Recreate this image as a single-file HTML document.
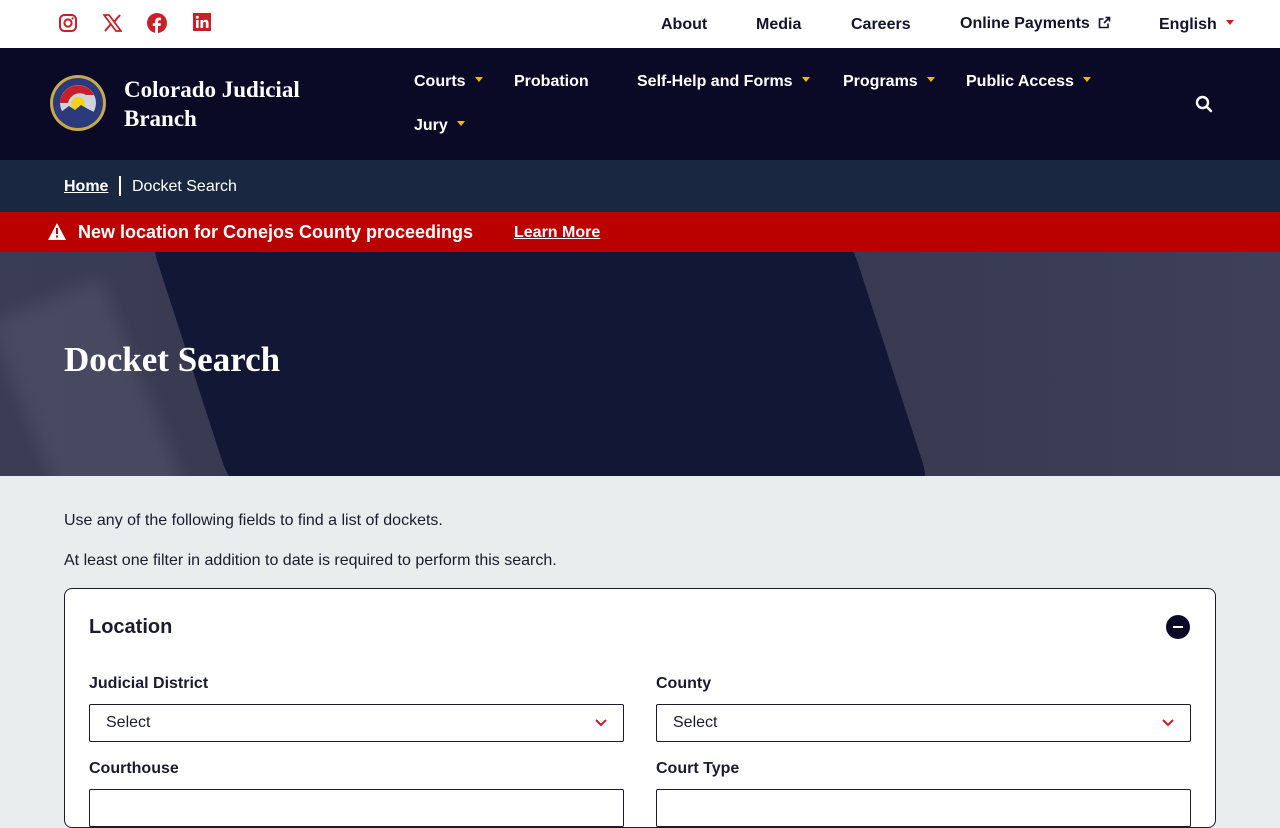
<!DOCTYPE html>
<html><head><meta charset="utf-8"><style>
*{box-sizing:border-box;margin:0;padding:0}
body{width:1280px;height:800px;overflow:hidden;font-family:"Liberation Sans",sans-serif;background:#e9eded;color:#1b1b2f}
.top{height:48px;background:#fff;position:relative}
.top .ic{position:absolute;top:13px}
.top .lk{position:absolute;top:15px;font-size:16px;font-weight:bold;color:#13132b}
.nav{height:112px;background:#0b0a26;position:relative;color:#fff}
.nav .n{position:absolute;font-size:16px;font-weight:bold}
.car{display:inline-block;width:0;height:0;border-left:4px solid transparent;border-right:4px solid transparent;border-top:5px solid #f2b51c;margin-left:9px;vertical-align:4px}
.bc{height:52px;background:#1a2740;color:#fff;font-size:16px;position:relative}
.alert{height:40px;background:#bb0000;color:#fff;position:relative;font-weight:bold}
.hero{height:224px;position:relative;overflow:hidden;background:linear-gradient(90deg,#3b3d55 0%,#35364e 50%,#3f4058 100%)}
.hero h1{position:absolute;left:64px;top:88px;font-family:"Liberation Serif",serif;font-size:35px;color:#fff;font-weight:bold}
.sel{position:absolute;height:38px;border:1px solid #1b1b2f;border-radius:2px;background:#fff;font-size:16px;padding:9px 16px}
.lab{position:absolute;font-size:16px;font-weight:bold}
</style></head><body>
<div class="top">
<svg class="ic" style="left:58px" width="20" height="20" viewBox="0 0 20 20"><rect x="2" y="2" width="16" height="16" rx="4.5" fill="none" stroke="#c8202a" stroke-width="2"/><circle cx="10" cy="10" r="3.6" fill="none" stroke="#c8202a" stroke-width="2"/><circle cx="14.6" cy="5.4" r="1.1" fill="#c8202a"/></svg>
<svg class="ic" style="left:103px" width="19" height="20" viewBox="0 0 19 20"><path d="M1 2h5l12 16h-5z" fill="none" stroke="#c8202a" stroke-width="1.8"/><path d="M17 2L11 9M2 18l6-7" stroke="#c8202a" stroke-width="2"/></svg>
<svg class="ic" style="left:147px" width="20" height="20" viewBox="0 0 20 20"><circle cx="10" cy="10" r="10" fill="#c8202a"/><path d="M11 20v-7h2.5l.4-2.8H11V8.6c0-.8.3-1.4 1.4-1.4H14V4.7c-.3 0-1.2-.1-2.2-.1-2.2 0-3.6 1.300-3.6 3.700v1.900H5.800V13h2.400v7z" fill="#fff"/></svg>
<svg class="ic" style="left:193px" width="18" height="18" viewBox="0 0 18 18"><rect width="18" height="18" fill="#c8202a"/><rect x="3" y="7" width="2.6" height="8" fill="#fff"/><circle cx="4.3" cy="4.3" r="1.5" fill="#fff"/><path d="M7.5 7h2.5v1.2c.5-.9 1.500-1.400 2.700-1.400 2 0 2.800 1.200 2.800 3.400V15h-2.600v-4.300c0-1.100-.3-1.800-1.300-1.800s-1.500.7-1.500 1.800V15H7.500z" fill="#fff"/></svg>
<span class="lk" style="left:661px;top:16px">About</span>
<span class="lk" style="left:756px;top:16px">Media</span>
<span class="lk" style="left:851px;top:16px">Careers</span>
<span class="lk" style="left:960px;top:15px">Online Payments <svg width="13" height="13" viewBox="0 0 13 13" style="margin-left:4px;vertical-align:-1px"><path d="M10 7.5V11.5H1.5V3H5.5M7.5 1.5H11.5V5.5M11.5 1.5L6 7" fill="none" stroke="#13132b" stroke-width="1.6"/></svg></span>
<span class="lk" style="left:1159px;top:16px">English<span class="car" style="border-top-color:#c8202a"></span></span>
</div>
<div class="nav">
<svg style="position:absolute;left:49px;top:26px" width="58" height="58" viewBox="0 0 58 58"><circle cx="29" cy="29" r="28" fill="#c9a94a"/><circle cx="29" cy="29" r="25" fill="#2a3a7a"/><circle cx="29" cy="29" r="18" fill="#d0d3da"/><path d="M11 29a18 18 0 0 1 34-8h-8a12 12 0 0 0-18 8z" fill="#c8202a"/><circle cx="29" cy="30" r="7" fill="#f6d21a"/><path d="M12 38l8-6 6 4 6-5 7 4 6 3a18 18 0 0 1-33 0z" fill="#2a3a7a"/></svg>
<div style="position:absolute;left:124px;top:27px;font-family:'Liberation Serif',serif;font-size:23px;font-weight:bold;line-height:29px">Colorado Judicial<br>Branch</div>
<span class="n" style="left:414px;top:25px">Courts<span class="car"></span></span>
<span class="n" style="left:514px;top:25px">Probation</span>
<span class="n" style="left:637px;top:25px">Self-Help and Forms<span class="car"></span></span>
<span class="n" style="left:843px;top:25px">Programs<span class="car"></span></span>
<span class="n" style="left:966px;top:25px">Public Access<span class="car"></span></span>
<span class="n" style="left:414px;top:69px">Jury<span class="car"></span></span>
<svg style="position:absolute;left:1195px;top:47px" width="18" height="18" viewBox="0 0 18 18"><circle cx="7.500" cy="7.500" r="5.500" fill="none" stroke="#fff" stroke-width="2.400"/><path d="M11.500 11.500L16 16" stroke="#fff" stroke-width="2.600" stroke-linecap="round"/></svg>
</div>
<div class="bc"><span style="position:absolute;left:64px;top:18px;font-weight:bold;text-decoration:underline">Home</span><span style="position:absolute;left:119px;top:16px;width:2px;height:20px;background:#fff"></span><span style="position:absolute;left:132px;top:18px">Docket Search</span></div>
<div class="alert">
<svg style="position:absolute;left:48px;top:11px" width="18" height="17" viewBox="0 0 18 17"><path d="M9 0L18 17H0z" fill="#fff"/><rect x="8" y="5" width="2" height="6" fill="#bb0000"/><rect x="8" y="12.500" width="2" height="2" fill="#bb0000"/></svg>
<span style="position:absolute;left:78px;top:10px;font-size:18px">New location for Conejos County proceedings</span>
<span style="position:absolute;left:514px;top:12px;font-size:16px;text-decoration:underline">Learn More</span>
</div>
<div class="hero">
<div style="position:absolute;left:30px;top:40px;width:120px;height:240px;background:#55576e;transform:rotate(-22deg);opacity:.5;filter:blur(8px)"></div>
<div style="position:absolute;left:190px;top:-40px;width:700px;height:300px;background:#121735;border-radius:50px;transform:skewX(18deg)"></div>
<h1>Docket Search</h1>
</div>
<div style="position:relative">
<div style="position:absolute;left:64px;top:36px;font-size:16px">Use any of the following fields to find a list of dockets.</div>
<div style="position:absolute;left:64px;top:76px;font-size:16px">At least one filter in addition to date is required to perform this search.</div>
<div style="position:absolute;left:64px;top:112px;width:1152px;height:240px;background:#fff;border:1px solid #1b1b2f;border-radius:8px">
<div style="position:absolute;left:24px;top:27px;font-size:20px;font-weight:bold">Location</div>
<div style="position:absolute;left:1101px;top:26px;width:24px;height:24px;border-radius:50%;background:#0b0a26"><div style="position:absolute;left:7px;top:11px;width:10px;height:2px;background:#fff"></div></div>
</div>
<span class="lab" style="left:89px;top:199px">Judicial District</span>
<span class="lab" style="left:656px;top:199px">County</span>
<div class="sel" style="left:89px;top:228px;width:535px">Select<svg style="position:absolute;right:16px;top:14px" width="12" height="8" viewBox="0 0 12 8"><path d="M1 1l5 5 5-5" fill="none" stroke="#c8202a" stroke-width="2"/></svg></div>
<div class="sel" style="left:656px;top:228px;width:535px">Select<svg style="position:absolute;right:16px;top:14px" width="12" height="8" viewBox="0 0 12 8"><path d="M1 1l5 5 5-5" fill="none" stroke="#c8202a" stroke-width="2"/></svg></div>
<span class="lab" style="left:89px;top:284px">Courthouse</span>
<span class="lab" style="left:656px;top:284px">Court Type</span>
<div class="sel" style="left:89px;top:313px;width:535px"></div>
<div class="sel" style="left:656px;top:313px;width:535px"></div>
</div>
</body></html>
